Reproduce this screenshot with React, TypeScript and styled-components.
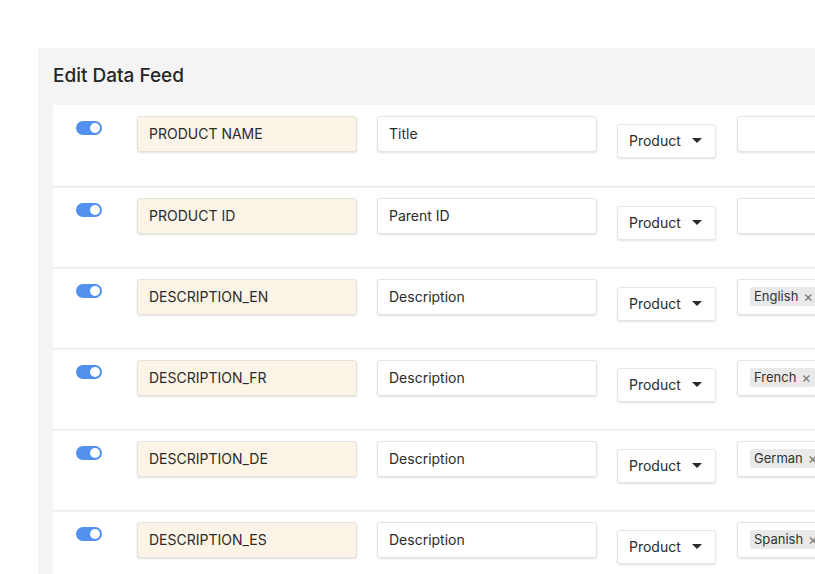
import React from "react"
import styled, { createGlobalStyle } from "styled-components"

const GlobalStyle = createGlobalStyle`
  html, body {
    margin: 0;
    padding: 0;
    background: #ffffff;
    font-family: Inter, "Noto Sans", "Liberation Sans", sans-serif;
    color: #2b2b2b;
    overflow: hidden;
  }
`

const Page = styled.div`
  width: 815px;
  height: 574px;
  overflow: hidden;
  padding: 48px 0 0 38px;
  box-sizing: border-box;
`
const Panel = styled.div`
  width: 900px;
  background: #f4f4f4;
  padding: 15px 0 0 15px;
  box-sizing: border-box;
  min-height: 560px;
`
const Title = styled.h1`
  margin: 0 0 16px;
  font-size: 19px;
  font-weight: 500;
  line-height: 26px;
  color: #262626;
`
const Card = styled.div`
  background: #ffffff;
  display: flex;
  flex-direction: column;
`
const Row = styled.div<{ first?: boolean }>`
  display: flex;
  align-items: flex-start;
  height: 81px;
  box-sizing: border-box;
  padding: 11px 0 0 23px;
  border-top: ${({ first }) => (first ? "none" : "1px solid #e9e9e9")};
  box-shadow: ${({ first }) => (first ? "none" : "inset 0 5px 0 -4px #f3f3f3")};
`
const Toggle = styled.div`
  width: 26px;
  height: 14px;
  margin: 5px 35px 0 0;
  border-radius: 7px;
  background: #5290ee;
  position: relative;
  flex-shrink: 0;
  &::after {
    content: "";
    position: absolute;
    right: 2px;
    top: 2px;
    width: 10px;
    height: 10px;
    border-radius: 50%;
    background: #ffffff;
  }
`
const Field = styled.div<{ tone?: "label" | "plain"; width?: number }>`
  width: ${({ width }) => width ?? 220}px;
  height: 36px;
  box-sizing: border-box;
  display: flex;
  align-items: center;
  gap: 6px;
  padding: 0 11px 2px;
  margin-right: 20px;
  flex-shrink: 0;
  border: 1px solid #e6e3de;
  border-radius: 3px;
  background: ${({ tone }) => (tone === "label" ? "#fcf4e7" : "#ffffff")};
  box-shadow: 0 1px 2px rgba(0, 0, 0, 0.12);
  font-size: 14px;
  color: #2b2b2b;
`
const Select = styled.div`
  width: 99px;
  height: 34px;
  margin-top: 8px;
  margin-right: 21px;
  box-sizing: border-box;
  display: flex;
  align-items: center;
  justify-content: space-between;
  padding: 0 13px 1px 11px;
  flex-shrink: 0;
  border: 1px solid #e6e6e6;
  border-radius: 3px;
  background: #ffffff;
  box-shadow: 0 1px 2px rgba(0, 0, 0, 0.12);
  font-size: 14px;
  color: #2b2b2b;
`
const Caret = styled.span`
  width: 0;
  height: 0;
  border-left: 5px solid transparent;
  border-right: 5px solid transparent;
  border-top: 5px solid #2b2b2b;
`
const Tag = styled.span`
  display: inline-flex;
  align-items: center;
  gap: 5px;
  background: #e9e9e9;
  border-radius: 2px;
  padding: 1px 4px;
  font-size: 13px;
  line-height: 17px;
  color: #333333;
  margin-left: 1px;
`
const TagClose = styled.span`
  color: #777777;
  font-size: 15px;
  line-height: 17px;
`

const rows = [
  { key: "PRODUCT NAME", name: "Title" },
  { key: "PRODUCT ID", name: "Parent ID" },
  { key: "DESCRIPTION_EN", name: "Description", lang: "English" },
  { key: "DESCRIPTION_FR", name: "Description", lang: "French" },
  { key: "DESCRIPTION_DE", name: "Description", lang: "German" },
  { key: "DESCRIPTION_ES", name: "Description", lang: "Spanish" },
]

const App = () => (
  <>
    <GlobalStyle />
    <Page>
      <Panel>
        <Title>Edit Data Feed</Title>
        <Card>
          {rows.map((row, index) => (
            <Row key={row.key} first={index === 0}>
              <Toggle />
              <Field tone="label">{row.key}</Field>
              <Field>{row.name}</Field>
              <Select>
                Product
                <Caret />
              </Select>
              <Field width={200}>
                {row.lang && (
                  <Tag>
                    {row.lang}
                    <TagClose>×</TagClose>
                  </Tag>
                )}
              </Field>
            </Row>
          ))}
        </Card>
      </Panel>
    </Page>
  </>
)

export default App
